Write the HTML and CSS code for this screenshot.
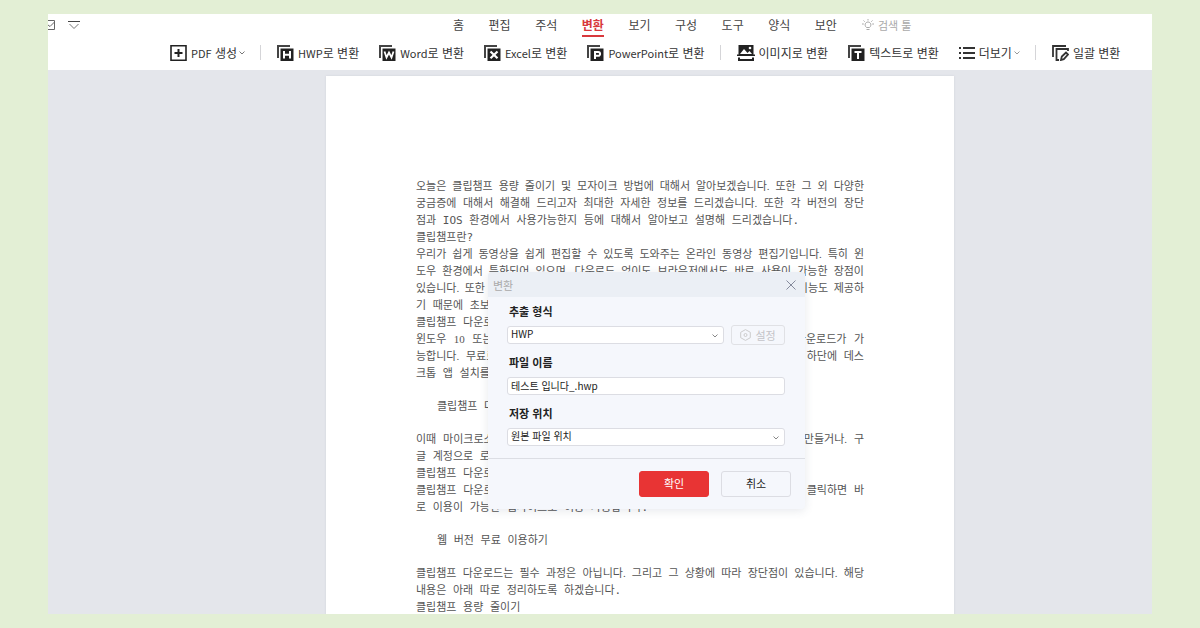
FILE: index.html
```
<!DOCTYPE html>
<html lang="ko">
  <head>
    <meta charset="UTF-8" />
    <meta name="viewport" content="width=device-width, initial-scale=1.0" />
    <title>PDF 변환</title>
    <link rel="stylesheet" href="styles.css">
  </head>
  <body>
    <div class="app">
      <header class="header">
        <div class="menu-row">
          <div class="quick">
            <button type="button" class="quick-btn" aria-label="메일">
              <svg width="7" height="12" viewBox="0 0 7 12" fill="none" stroke="#666"><path d="M0 1.500h6.500v9H0M0 6l2 1.500L6.500 3"/></svg>
            </button>
            <button type="button" class="quick-btn" aria-label="도구 모음">
              <svg width="12" height="10" viewBox="0 0 12 10" fill="none"><path d="M0 1.500h12" stroke="#444"/><path d="M1.500 4L6 8.500 10.500 4" stroke="#777"/></svg>
            </button>
          </div>
          <nav class="tabs">
            <a href="#">홈</a>
            <a href="#">편집</a>
            <a href="#">주석</a>
            <a href="#" class="active">변환</a>
            <a href="#">보기</a>
            <a href="#">구성</a>
            <a href="#">도구</a>
            <a href="#">양식</a>
            <a href="#">보안</a>
          </nav>
          <button type="button" class="search-tool">
            <svg width="12" height="12" viewBox="0 0 12 12" fill="none" stroke="#aaa"><path d="M4.500 8.500C2 6.500 3.200 3 6 3s4 3.500 1.500 5.500zM4.500 10.500h3M6 0v1.500M0 5h1.800M10.200 5H12M1.500 1.500l1.200 1.200M10.500 1.500L9.300 2.700"/></svg>
            검색 툴
          </button>
        </div>
        <div class="toolbar">
          <button type="button" class="tool">
            <svg width="17" height="16" viewBox="0 0 17 16" fill="none" stroke="#222"><path d="M1 .8h15v14.400H1z" stroke-width="1.600"/><path d="M8.500 4v8M4.500 8h8" stroke-width="2"/></svg>
            <span><span class="latin">PDF</span> 생성</span>
            <svg class="caret" width="6" height="4" viewBox="0 0 6 4" fill="none" stroke="#777"><path d="M.5.5L3 3 5.500.5"/></svg>
          </button>
          <span class="divider"></span>
          <button type="button" class="tool">
            <svg width="17" height="16" viewBox="0 0 17 16"><path d="M1 13V1h12" fill="none" stroke="#444" stroke-width="2"/><path d="M3.500 3.500H16.500V16H3.500z" fill="#222"/><path d="M7 6v7.500M13 6v7.500M7 9.800h6" fill="none" stroke="#fff" stroke-width="2"/></svg>
            <span><span class="latin">HWP</span>로 변환</span>
          </button>
          <button type="button" class="tool">
            <svg width="17" height="16" viewBox="0 0 17 16"><path d="M1 13V1h12" fill="none" stroke="#444" stroke-width="2"/><path d="M3.500 3.500H16.500V16H3.500z" fill="#222"/><path d="M5.500 6.500l2 6 2.500-5 2.500 5 2-6" fill="none" stroke="#fff" stroke-width="1.800"/></svg>
            <span><span class="latin">Word</span>로 변환</span>
          </button>
          <button type="button" class="tool">
            <svg width="17" height="16" viewBox="0 0 17 16"><path d="M1 13V1h12" fill="none" stroke="#444" stroke-width="2"/><path d="M3.500 3.500H16.500V16H3.500z" fill="#222"/><path d="M6.500 6.500l7 6.800M13.500 6.500l-7 6.800" fill="none" stroke="#fff" stroke-width="2.200"/></svg>
            <span><span class="latin">Excel</span>로 변환</span>
          </button>
          <button type="button" class="tool">
            <svg width="17" height="16" viewBox="0 0 17 16"><path d="M1 13V1h12" fill="none" stroke="#444" stroke-width="2"/><path d="M3.500 3.500H16.500V16H3.500z" fill="#222"/><path d="M8 14V7h3.200a1.800 1.800 0 0 1 0 3.800H8" fill="none" stroke="#fff" stroke-width="2"/></svg>
            <span><span class="latin">PowerPoint</span>로 변환</span>
          </button>
          <span class="divider"></span>
          <button type="button" class="tool">
            <svg width="18" height="16" viewBox="0 0 18 16"><path d="M1.500 0h15v9.500H18V11H0V9.500h1.500z" fill="#222"/><path d="M3 9l4-5 3.500 4L12.500 6l2.500 3z" fill="#fff"/><circle cx="13" cy="3" r="1.300" fill="#fff"/><path d="M2 12.500v2.500h14v-2.500" fill="none" stroke="#222" stroke-width="2"/></svg>
            <span>이미지로 변환</span>
          </button>
          <button type="button" class="tool">
            <svg width="17" height="16" viewBox="0 0 17 16"><path d="M1 13V1h12" fill="none" stroke="#444" stroke-width="2"/><path d="M3.500 3.500H16.500V16H3.500z" fill="#222"/><path d="M6.500 7h7M10 7v7" fill="none" stroke="#fff" stroke-width="2"/></svg>
            <span>텍스트로 변환</span>
          </button>
          <button type="button" class="tool">
            <svg width="16" height="14" viewBox="0 0 16 14" fill="none" stroke="#333" stroke-width="2"><path d="M0 2h2M0 7h2M0 12h2M4 2h12M4 7h12M4 12h12"/></svg>
            <span>더보기</span>
            <svg class="caret" width="6" height="4" viewBox="0 0 6 4" fill="none" stroke="#999"><path d="M.5.5L3 3 5.500.5"/></svg>
          </button>
          <span class="divider"></span>
          <button type="button" class="tool">
            <svg width="17" height="16" viewBox="0 0 17 16" fill="none" stroke="#333" stroke-width="1.800"><path d="M1 12V1h13M7 15H4.500V4H16v2"/><path d="M9 15l.8-3.500L14 7.500l2 2-4.200 4.700z"/></svg>
            <span>일괄 변환</span>
          </button>
        </div>
      </header>

      <main class="workspace">
        <article class="page">
          <p>
            <span class="full">오늘은 클립챔프 용량 줄이기 및 모자이크 방법에 대해서 알아보겠습니다. 또한 그 외 다양한</span>
            <span class="full">궁금증에 대해서 해결해 드리고자 최대한 자세한 정보를 드리겠습니다. 또한 각 버전의 장단</span>
            <span>점과 IOS 환경에서 사용가능한지 등에 대해서 알아보고 설명해 드리겠습니다.</span>
            <span>클립챔프란?</span>
            <span class="full">우리가 쉽게 동영상을 쉽게 편집할 수 있도록 도와주는 온라인 동영상 편집기입니다. 특히 윈</span>
            <span class="full">도우 환경에서 특화되어 있으며, 다운로드 없이도 브라우저에서도 바로 사용이 가능한 장점이</span>
            <span class="full">있습니다. 또한 다양한 편집 도구와 기본 템플릿을 그리고 자막 효과 등의 여러 기능도 제공하</span>
            <span>기 때문에 초보자도 쉽게 사용할 수 있습니다.</span>
            <span>클립챔프 다운로드</span>
            <span class="full">윈도우 10 또는 11 버전을 사용하고 있다면 마이크로소프트 앱 스토어에서 다운로드가 가</span>
            <span class="full">능합니다. 무료로 다운로드 받을 수 있으며 홈페이지에 접속한 다음 바로 왼쪽 하단에 데스</span>
            <span>크톱 앱 설치를 진행하면 됩니다.</span>
          </p>
          <p class="indent"><span>클립챔프 다운로드 방법</span></p>
          <p>
            <span class="full">이때 마이크로소프트 계정이 필요합니다. 만약에 계정이 없다면 새로운 계정을 만들거나. 구</span>
            <span>글 계정으로 로그인할 수 있습니다.</span>
            <span>클립챔프 다운로드</span>
            <span class="full">클립챔프 다운로드 없이 웹 버전을 이용하고 싶다면 홈페이지에서 무료 체험을 클릭하면 바</span>
            <span>로 이용이 가능한 웹사이트로 이동 가능합니다.</span>
          </p>
          <p class="indent"><span>웹 버전 무료 이용하기</span></p>
          <p>
            <span class="full">클립챔프 다운로드는 필수 과정은 아닙니다. 그리고 그 상황에 따라 장단점이 있습니다. 해당</span>
            <span>내용은 아래 따로 정리하도록 하겠습니다.</span>
            <span>클립챔프 용량 줄이기</span>
          </p>

          <form class="dialog" role="dialog" aria-labelledby="dialogTitle">
            <div class="dialog-header">
              <span id="dialogTitle">변환</span>
              <button type="button" class="close" aria-label="닫기">
                <svg width="10" height="10" viewBox="0 0 10 10" fill="none" stroke="#858a9c"><path d="M.5.5l9 9M9.500.5l-9 9"/></svg>
              </button>
            </div>
            <div class="dialog-body">
              <div class="form-group">
                <label for="format">추출 형식</label>
                <div class="field-row">
                  <div class="select">
                    <select id="format" name="format">
                      <option>HWP</option>
                    </select>
                    <svg width="6" height="4" viewBox="0 0 6 4" fill="none" stroke="#888"><path d="M.5.5L3 3 5.500.5"/></svg>
                  </div>
                  <button type="button" class="settings" disabled>
                    <svg width="11" height="12" viewBox="0 0 11 12" fill="none" stroke="#ccc"><path d="M5.500.6l4.800 2.700v5.400L5.500 11.400.7 8.700V3.300z"/><circle cx="5.500" cy="6" r="1.500"/></svg>
                    설정
                  </button>
                </div>
              </div>
              <div class="form-group">
                <label for="filename">파일 이름</label>
                <input type="text" id="filename" name="filename" value="테스트 입니다_.hwp" />
              </div>
              <div class="form-group">
                <label for="location">저장 위치</label>
                <div class="select">
                  <select id="location" name="location">
                    <option>원본 파일 위치</option>
                  </select>
                  <svg width="6" height="4" viewBox="0 0 6 4" fill="none" stroke="#888"><path d="M.5.5L3 3 5.500.5"/></svg>
                </div>
              </div>
            </div>
            <div class="dialog-footer">
              <button type="submit" class="btn primary">확인</button>
              <button type="button" class="btn">취소</button>
            </div>
          </form>
        </article>
      </main>
    </div>
  </body>
</html>
```
FILE: styles.css
```
* {
  box-sizing: border-box;
}
body {
  margin: 0;
  height: 100vh;
  padding: 14px 48px;
  background-color: #e3efd5;
  font-family: "Noto Sans CJK KR", sans-serif;
  font-size: 12px;
  color: #333;
}
button,
input,
select {
  font: inherit;
  color: inherit;
}
button {
  padding: 0;
  border: none;
  background: none;
  white-space: nowrap;
}
svg {
  display: block;
  flex: none;
}
.app {
  display: flex;
  flex-direction: column;
  height: 100%;
  overflow: hidden;
  background-color: #e4e6eb;
}

/* header */
.header {
  flex: none;
  height: 56px;
  background-color: #fff;
}
.menu-row {
  display: flex;
  height: 24px;
}
.quick {
  display: flex;
  align-items: center;
  gap: 13px;
  width: 405px;
  height: 22px;
}
.tabs {
  display: flex;
  justify-content: space-between;
  width: 384px;
}
.tabs a {
  height: 22px;
  line-height: 22px;
  color: #444;
  text-decoration: none;
}
.tabs .active {
  height: 23px;
  border-bottom: 2px solid #d8383c;
  color: #d8383c;
  font-weight: bold;
}
.search-tool {
  display: flex;
  align-items: center;
  gap: 4px;
  height: 22px;
  margin-left: 25px;
  font-size: 11px;
  color: #aaa;
}
.toolbar {
  display: flex;
  align-items: center;
  height: 29px;
  padding-left: 112px;
}
.tool {
  display: flex;
  align-items: center;
  gap: 4px;
  padding: 0 10px;
  line-height: 16px;
}
.latin {
  font-size: 11px;
}
.caret {
  margin-left: -2px;
}
.divider {
  width: 1px;
  height: 15px;
  margin: 0 6px 0 5px;
  background-color: #d5d5d8;
}

/* document */
.workspace {
  flex: 1;
  min-height: 0;
  padding: 6px 0 0 80px;
}
.page {
  position: relative;
  max-width: 628px;
  min-height: 100%;
  margin: 0 auto;
  padding: 102px 90px 0;
  background-color: #fff;
  box-shadow: 0 0 2px #cfd2d9;
  font-size: 11px;
  line-height: 17px;
  color: #555;
}
.page p {
  margin: 0 0 16px;
}
.page p span {
  display: block;
  height: 17px;
  font-family: "DejaVu Sans Mono", "Noto Sans CJK KR", monospace;
  white-space: nowrap;
}
.page p .full {
  font-family: "Liberation Serif", "Noto Sans CJK KR", serif;
  white-space: normal;
  text-align-last: justify;
}
.page .indent {
  padding-left: 21px;
}

/* convert dialog */
.dialog {
  position: absolute;
  top: 196px;
  left: 162px;
  width: 317px;
  border-radius: 4px;
  background-color: #f5f7fc;
  box-shadow: 0 2px 10px rgba(60, 70, 110, 0.12);
  line-height: 16px;
  color: #222;
}
.dialog-header {
  display: flex;
  align-items: center;
  justify-content: space-between;
  height: 25px;
  padding: 0 9px 0 5px;
  border-radius: 4px 4px 0 0;
  background-color: #ebeff5;
  color: #aaa;
}
.dialog-body {
  display: flex;
  flex-direction: column;
  gap: 11px;
  padding: 6px 20px 12px 19px;
}
.form-group label {
  display: block;
  height: 16px;
  margin-bottom: 7px;
  padding-left: 2px;
  font-weight: bold;
}
.form-group input,
.form-group select {
  display: block;
  width: 100%;
  height: 18px;
  padding: 0 3px 2px;
  border: 1px solid #dcdde3;
  border-radius: 3px;
  background-color: #fff;
  font-size: 10px;
  line-height: 14px;
  appearance: none;
}
.form-group + .form-group {
  margin-top: -1px;
}
.field-row {
  display: flex;
  align-items: center;
  gap: 7px;
  height: 18px;
}
.select {
  position: relative;
  flex: 1;
}
.select svg {
  position: absolute;
  top: 8px;
  right: 6px;
  pointer-events: none;
}
.settings {
  display: flex;
  align-items: center;
  justify-content: center;
  gap: 4px;
  width: 54px;
  height: 20px;
  border: 1px solid #e0e1e5;
  border-radius: 3px;
  color: #c4c4c8;
}
.dialog-footer {
  display: flex;
  justify-content: flex-end;
  gap: 12px;
  padding: 12px 14px;
  border-top: 1px solid #dcdee4;
}
.btn {
  width: 70px;
  height: 26px;
  padding-bottom: 2px;
  border: 1px solid #dcdde3;
  border-radius: 3px;
}
.btn.primary {
  border-color: #e83434;
  background-color: #e83434;
  color: #fff;
}
```
